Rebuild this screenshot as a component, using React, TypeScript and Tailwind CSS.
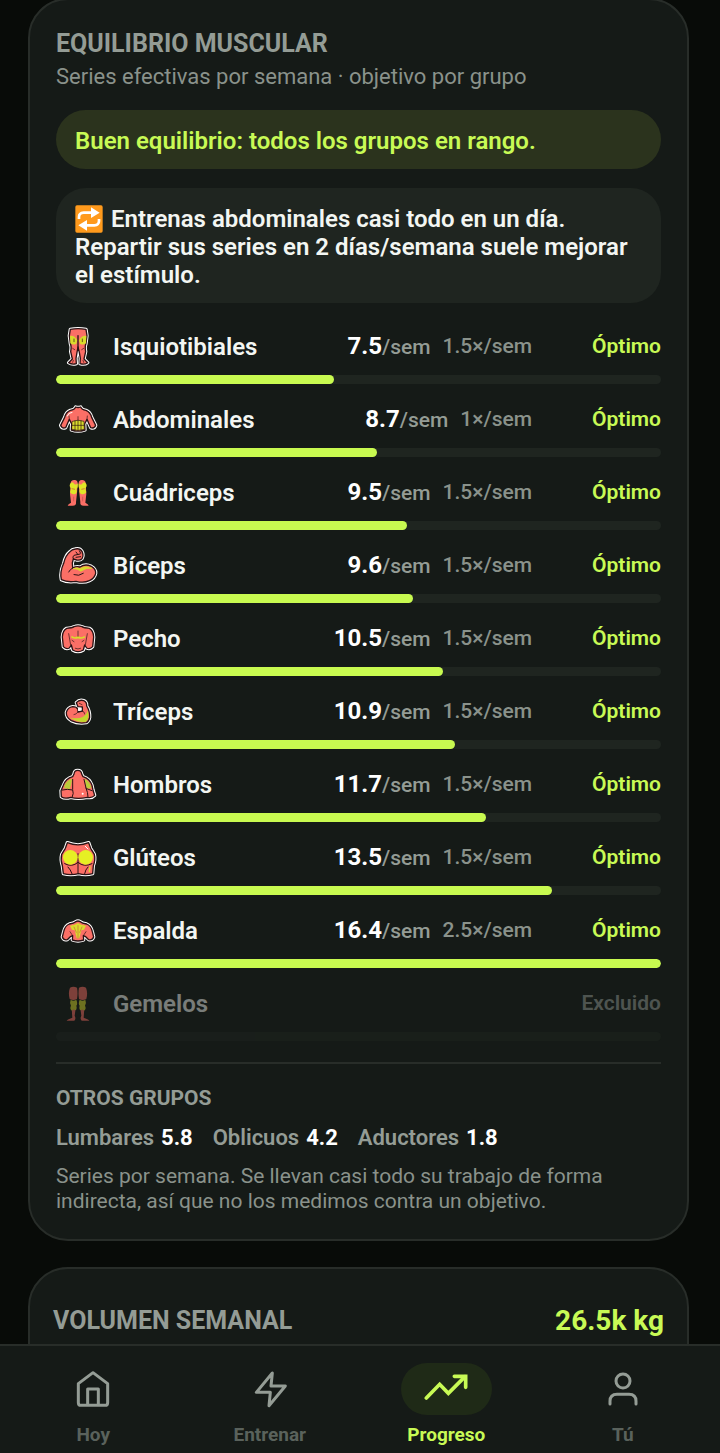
import React from "react";

interface Muscle {
  name: string;
  icon: React.ReactNode;
  sets?: string;
  freq?: string;
  percent: number;
  excluded?: boolean;
}

const CORAL = "#fb6f66";
const YELLOW = "#d9dc2c";
const INK = "#2a1214";

// Silhouette with a white sticker border, the details go on top as children
const Sticker: React.FC<{
  viewBox: string;
  shape: string;
  children?: React.ReactNode;
}> = ({ viewBox, shape, children }) => (
  <svg viewBox={viewBox} className="h-10 w-10" aria-hidden="true">
    <path d={shape} fill="#fff" stroke="#fff" strokeWidth="10" strokeLinejoin="round" />
    <path d={shape} fill={CORAL} stroke={INK} strokeWidth="4" strokeLinejoin="round" />
    <g fill="none" stroke={INK} strokeWidth="2" strokeLinecap="round">
      {children}
    </g>
  </svg>
);

const HamstringsIcon = () => (
  <Sticker
    viewBox="24 30 120 120"
    shape="M61 37 Q84 33 108 37 L111 56 L108 80 Q104 88 107 104 L102 126 L113 137 Q104 144 90 140 L91 124 L88 106 L84 90 L81 106 L78 124 L79 140 Q66 144 56 137 L67 126 L62 104 Q65 88 61 80 L58 56Z"
  >
    <path d="M60 57 Q72 54 82 70 L79 80 Q70 86 61 79Z" fill={YELLOW} stroke="none" />
    <path d="M109 57 Q97 54 87 70 L90 80 Q99 86 108 79Z" fill={YELLOW} stroke="none" />
    <path d="M84 56 V92" strokeWidth="4" />
    <path d="M72 66 V74 M97 66 V74 M68 94 L74 98 M101 94 L95 98 M70 130 L68 136 M99 130 L101 136" />
  </Sticker>
);

const AbsIcon = () => (
  <Sticker
    viewBox="24 250 120 120"
    shape="M77 271 Q84 274 92 271 Q95 279 108 281 Q121 286 125 302 L137 326 Q133 337 122 333 L111 308 L104 322 L105 340 Q84 347 64 340 L65 322 L58 308 L47 333 Q36 337 32 326 L44 302 Q48 286 61 281 Q74 279 77 271Z"
  >
    <path d="M67 314 Q84 307 102 314 L103 338 Q84 345 66 338Z" fill={YELLOW} />
    <path d="M84 300 V342 M75 312 V340 M93 312 V340 M67 326 H102" />
    <path d="M58 308 L57 298 M111 308 L112 298" />
    <path d="M52 298 Q54 288 66 287" stroke="#fff" strokeWidth="3" />
  </Sticker>
);

const QuadsIcon = () => (
  <svg viewBox="24 21 120 120" className="h-10 w-10" aria-hidden="true">
    <g fill={CORAL}>
      <path d="M62 50 Q64 41 74 42 Q83 43 83 52 L81 82 L78 108 Q80 119 68 119 H53 Q54 114 63 110 L60 84Z" />
      <path d="M107 50 Q105 41 95 42 Q86 43 86 52 L88 82 L91 108 Q89 119 101 119 H116 Q115 114 106 110 L109 84Z" />
    </g>
    <g fill="#e0e626">
      <path d="M60 54 Q67 44 73 54 Q79 58 83 52 Q85 66 79 69 Q83 78 77 83 Q67 88 60 79 L63 68 Q56 61 60 54Z" />
      <path d="M109 54 Q102 44 96 54 Q90 58 86 52 Q84 66 90 69 Q86 78 92 83 Q102 88 109 79 L106 68 Q113 61 109 54Z" />
    </g>
    <path d="M65 68 L75 70 M104 68 L94 70 M71 92 V106 M98 92 V106" stroke="#c24c48" strokeWidth="2" fill="none" />
  </svg>
);

const BicepsIcon = () => (
  <Sticker
    viewBox="24 240 120 120"
    shape="M60 257 Q66 250 76 249 Q90 246 96 256 Q102 268 96 278 Q90 284 80 282 L70 279 L67 291 L68 306 Q78 300 90 303 Q106 292 124 301 Q138 309 137 322 Q134 337 118 344 Q102 352 78 346 Q52 350 34 341 Q29 318 41 292 Q46 268 60 257Z"
  >
    <path d="M70 308 Q80 303 90 308 Q106 297 126 307 Q110 304 92 316 Q82 307 70 308Z" fill={YELLOW} stroke={YELLOW} />
    <path d="M70 279 Q66 272 72 268 L90 264 M78 258 L84 266 M88 254 L92 262 M78 274 L92 272" strokeWidth="3" />
    <path d="M68 306 Q60 310 56 318 M72 326 Q86 332 100 322" strokeWidth="3" />
  </Sticker>
);

const ChestIcon = () => (
  <Sticker
    viewBox="24 20 120 120"
    shape="M72 43 Q84 38 96 43 Q102 47 118 48 Q130 54 131 74 L128 103 Q120 112 110 107 L104 98 L100 113 Q84 123 68 113 L64 98 L58 107 Q48 112 40 103 L37 74 Q38 54 50 48 Q66 47 72 43Z"
  >
    <path d="M66 74 Q76 80 84 74 Q92 80 103 74" stroke={YELLOW} strokeWidth="5" />
    <path d="M84 56 V72 M56 64 L62 98 M112 64 L106 98" />
    <path d="M66 84 L72 88 M102 84 L96 88 M76 108 Q84 112 92 108" />
  </Sticker>
);

const TricepsIcon = () => (
  <Sticker
    viewBox="24 240 120 120"
    shape="M79 272 Q88 262 101 266 Q111 270 110 282 Q120 298 119 316 Q117 328 109 332 Q84 336 64 326 Q48 316 49 301 Q53 286 68 284 Q80 284 84 292 L84 300 L97 297 L97 285 L84 284Z"
  >
    <path d="M60 317 Q84 322 98 315 Q112 306 113 294 Q120 318 108 329 Q84 333 60 317Z" fill="#c3d62c" stroke="none" />
    <path d="M84 287 H94 V295 L84 297Z" fill="#fff" stroke="none" />
    <path d="M84 300 Q78 308 72 308 M97 297 Q104 298 104 306 M88 274 L96 278" />
  </Sticker>
);

const ShouldersIcon = () => (
  <Sticker
    viewBox="24 15 120 120"
    shape="M72 42 Q73 31 83 31 Q94 31 95 42 L99 50 Q119 56 126 76 L129 90 L134 106 Q126 115 112 112 Q84 118 62 112 Q44 118 34 110 L33 92 L40 76 Q47 56 68 50Z"
  >
    <path d="M42 84 Q46 61 66 56 Q64 78 58 88Z" fill="#b9cc3a" stroke="none" />
    <path d="M102 56 Q119 61 124 84 L110 86 Q108 68 102 56Z" fill="#b9cc3a" stroke="none" />
    <path d="M37 90 Q52 86 68 90 Q72 100 67 110 M68 58 L68 88 M108 84 Q114 98 114 110 M102 58 L108 84 M126 92 L110 86" strokeWidth="3" />
    <circle cx="98" cy="101" r="3" fill="#fff" stroke="none" />
  </Sticker>
);

const GlutesIcon = () => (
  <Sticker
    viewBox="24 235 120 120"
    shape="M52 249 Q84 262 116 249 L122 266 L133 284 Q137 300 130 318 L128 342 Q106 348 86 342 Q62 348 40 342 L37 318 Q31 300 35 284 L46 266Z"
  >
    <path d="M84 282 V342 M44 312 Q66 324 84 308 Q102 324 126 312 M66 342 Q62 330 54 322 M114 322 Q106 330 104 342" strokeWidth="3" />
    <circle cx="61" cy="293" r="22" fill="#e6f024" stroke="none" />
    <circle cx="107" cy="293" r="22" fill="#e6f024" stroke="none" />
    <path d="M120 322 L118 336" stroke={YELLOW} strokeWidth="4" />
    <path d="M106 260 L114 268" stroke="#fff" strokeWidth="3" />
  </Sticker>
);

const BackIcon = () => (
  <Sticker
    viewBox="24 12 120 120"
    shape="M77 44 Q84 40 91 44 Q96 49 110 51 Q123 56 127 74 L131 90 Q127 101 116 98 L107 89 L100 86 L101 99 Q84 105 67 99 L68 86 L61 89 L52 98 Q41 101 37 90 L41 74 Q45 56 58 51 Q72 49 77 44Z"
  >
    <path d="M60 56 Q76 54 84 48 Q92 54 108 56 L102 68 L94 70 L88 92 Q84 97 80 92 L74 70 L66 68Z" fill={YELLOW} stroke="none" />
    <path d="M84 56 V94 M72 60 L79 76 M96 60 L89 76" stroke="#c9663c" />
    <path d="M68 86 L60 74 M100 86 L108 74" />
  </Sticker>
);

const CalvesIcon = () => (
  <svg viewBox="24 231 120 120" className="h-10 w-10" aria-hidden="true">
    <g fill={CORAL}>
      <path d="M60 242 Q70 236 81 242 Q84 260 81 276 Q70 282 59 276 Q54 258 60 242Z" />
      <path d="M108 242 Q98 236 87 242 Q84 260 87 276 Q98 282 109 276 Q114 258 108 242Z" />
      <path d="M65 304 H77 L74 326 Q79 336 73 341 H50 Q50 338 67 332Z" />
      <path d="M103 304 H91 L94 326 Q89 336 95 341 H118 Q118 338 101 332Z" />
    </g>
    <g fill={YELLOW}>
      <path d="M62 278 Q70 284 79 278 Q84 290 79 296 Q82 306 76 310 Q70 304 66 311 Q58 306 63 296 Q58 288 62 278Z" />
      <path d="M106 278 Q98 284 89 278 Q84 290 89 296 Q86 306 92 310 Q98 304 102 311 Q110 306 105 296 Q110 288 106 278Z" />
    </g>
  </svg>
);

const RepeatEmoji = () => (
  <svg viewBox="0 0 84 84" className="mr-0.5 inline-block h-7 w-7 align-bottom" role="img" aria-label="Repetir">
    <rect x="1" y="1" width="82" height="82" rx="5" fill="#ff9a1c" />
    <path d="M12 42 V36 Q12 24 26 23 H50" fill="none" stroke="#fff" strokeWidth="8" />
    <path d="M72 42 V48 Q72 60 58 61 H34" fill="none" stroke="#fff" strokeWidth="8" />
    <path d="M48 7 L74 23 L48 39Z M36 45 L10 61 L36 77Z" fill="#fff" />
  </svg>
);

const muscles: Muscle[] = [
  { name: "Isquiotibiales", icon: <HamstringsIcon />, sets: "7.5", freq: "1.5", percent: 46 },
  { name: "Abdominales", icon: <AbsIcon />, sets: "8.7", freq: "1", percent: 53 },
  { name: "Cuádriceps", icon: <QuadsIcon />, sets: "9.5", freq: "1.5", percent: 58 },
  { name: "Bíceps", icon: <BicepsIcon />, sets: "9.6", freq: "1.5", percent: 59 },
  { name: "Pecho", icon: <ChestIcon />, sets: "10.5", freq: "1.5", percent: 64 },
  { name: "Tríceps", icon: <TricepsIcon />, sets: "10.9", freq: "1.5", percent: 66 },
  { name: "Hombros", icon: <ShouldersIcon />, sets: "11.7", freq: "1.5", percent: 71 },
  { name: "Glúteos", icon: <GlutesIcon />, sets: "13.5", freq: "1.5", percent: 82 },
  { name: "Espalda", icon: <BackIcon />, sets: "16.4", freq: "2.5", percent: 100 },
  { name: "Gemelos", icon: <CalvesIcon />, percent: 0, excluded: true },
];

const otherGroups = [
  { name: "Lumbares", value: "5.8" },
  { name: "Oblicuos", value: "4.2" },
  { name: "Aductores", value: "1.8" },
];

const MuscleRow: React.FC<{ muscle: Muscle }> = ({ muscle }) => (
  <li className={muscle.excluded ? "opacity-45" : ""}>
    <div className="flex h-10 items-center">
      <div className="flex w-11 shrink-0 justify-center">{muscle.icon}</div>
      <span className="ml-[13px] flex-1 text-2xl font-semibold text-[#f3f6f2]">
        {muscle.name}
      </span>
      {!muscle.excluded && (
        <>
          <span className="text-[21px] font-medium text-[#949c95]">
            <b className="text-2xl font-bold text-white">{muscle.sets}</b>
            /sem
          </span>
          <span className="ml-3 text-[21px] font-medium text-[#8a928b]">
            {muscle.freq}×/sem
          </span>
        </>
      )}
      <span
        className={`ml-[14px] w-[115px] text-right text-[21px] font-semibold ${
          muscle.excluded ? "text-[#949c95]" : "text-[#c8fa55]"
        }`}
      >
        {muscle.excluded ? "Excluido" : "Óptimo"}
      </span>
    </div>
    <div className="mt-2 h-[9px] overflow-hidden rounded-full bg-[#1f2520]">
      <div
        className="h-full rounded-full bg-[#c8fa50]"
        style={{ width: `${muscle.percent}%` }}
      />
    </div>
  </li>
);

const tabs = [
  {
    label: "Hoy",
    icon: (
      <svg viewBox="216 351 132 132" className="h-11 w-11" fill="none" stroke="currentColor" strokeWidth="9" strokeLinejoin="round" aria-hidden="true">
        <path d="M238 401 L282 368 L326 401 V458 Q326 466 318 466 H246 Q238 466 238 458Z" />
        <path d="M266 466 V417 H298 V466" />
      </svg>
    ),
  },
  {
    label: "Entrenar",
    icon: (
      <svg viewBox="742 351 132 132" className="h-11 w-11" fill="none" stroke="currentColor" strokeWidth="9" strokeLinejoin="round" aria-hidden="true">
        <path d="M815 369 L767 427 H809 L805 467 L854 408 H811Z" />
      </svg>
    ),
  },
  {
    label: "Progreso",
    active: true,
    icon: (
      <svg viewBox="194 351 132 132" className="h-11 w-11" fill="none" stroke="currentColor" strokeWidth="11" strokeLinecap="round" aria-hidden="true">
        <path d="M201 444 L241 403 L267 430 L317 380" />
        <path d="M285 379 H319 V412" />
      </svg>
    ),
  },
  {
    label: "Tú",
    icon: (
      <svg viewBox="724 351 132 132" className="h-11 w-11" fill="none" stroke="currentColor" strokeWidth="9" strokeLinecap="round" aria-hidden="true">
        <circle cx="790" cy="393" r="21" />
        <path d="M751 462 V454 Q751 433 772 433 H808 Q829 433 829 454 V462" />
      </svg>
    ),
  },
];

const App: React.FC = () => {
  return (
    <div className="flex h-screen flex-col bg-[#080b08] font-['Roboto',sans-serif]">
      <main className="-mt-0.5 min-h-0 flex-1 overflow-hidden pr-[31px] pl-7">
        <section className="rounded-[40px] border-2 border-[#282d29] bg-[#151a17] px-[26px] pt-[30px] pb-[25px]">
          <h2 className="text-[25px] leading-7 font-bold text-[#949c95]">
            EQUILIBRIO MUSCULAR
          </h2>
          <p className="mt-[5px] text-[22px] leading-7 text-[#8a928b]">
            Series efectivas por semana · objetivo por grupo
          </p>

          <p className="mt-[19px] rounded-[30px] bg-[#2b331d] px-[19px] pt-[17px] pb-[14px] text-2xl leading-7 font-semibold text-[#c8fa55]">
            Buen equilibrio: todos los grupos en rango.
          </p>
          <p className="mt-[19px] rounded-[30px] bg-[#1f2520] px-[19px] pt-[17px] pb-[14px] text-2xl leading-7 font-semibold text-[#f3f6f2]">
            <RepeatEmoji /> Entrenas abdominales casi todo en un día. Repartir
            sus series en 2 días/semana suele mejorar el estímulo.
          </p>

          <ul className="mt-6 flex flex-col gap-4">
            {muscles.map((muscle) => (
              <MuscleRow key={muscle.name} muscle={muscle} />
            ))}
          </ul>

          <hr className="mt-[21px] border-t-2 border-[#282d29]" />

          <h3 className="mt-5 text-[21px] leading-7 font-bold text-[#949c95]">
            OTROS GRUPOS
          </h3>
          <ul className="mt-3 flex flex-wrap gap-x-5 text-[22px] leading-7 font-semibold text-[#949c95]">
            {otherGroups.map((group) => (
              <li key={group.name} className="flex gap-[7px]">
                <span>{group.name}</span>
                <b className="font-bold text-white">{group.value}</b>
              </li>
            ))}
          </ul>
          <p className="mt-3 text-[21px] leading-[25px] text-[#8a928b]">
            Series por semana. Se llevan casi todo su trabajo de forma
            indirecta, así que no los medimos contra un objetivo.
          </p>
        </section>

        <section className="mt-[26px] rounded-[40px] border-2 border-[#282d29] bg-[#151a17] px-[23px] pt-8 pb-10">
          <div className="flex items-center justify-between">
            <h2 className="text-[25px] leading-10 font-bold text-[#949c95]">
              VOLUMEN SEMANAL
            </h2>
            <span className="text-[28px] leading-10 font-bold text-[#c8fa55]">
              26.5k kg
            </span>
          </div>
        </section>
      </main>

      <nav className="relative grid grid-cols-4 border-t-2 border-[#282d29] bg-[#151a17] pt-[17px] pr-[9px] pb-1.5 pl-[5px]">
        {tabs.map((tab) => (
          <button
            key={tab.label}
            type="button"
            aria-current={tab.active ? "page" : undefined}
            className="flex flex-col items-center"
          >
            <span
              className={`flex h-[52px] w-[91px] items-center justify-center rounded-full ${
                tab.active ? "bg-[#1f2a17] text-[#c8fa55]" : "text-[#949c95]"
              }`}
            >
              {tab.icon}
            </span>
            <span
              className={`mt-2 text-[19px] leading-6 font-bold ${
                tab.active ? "text-[#c8fa55]" : "text-[#5a625c]"
              }`}
            >
              {tab.label}
            </span>
          </button>
        ))}
      </nav>
    </div>
  );
};

export default App;
